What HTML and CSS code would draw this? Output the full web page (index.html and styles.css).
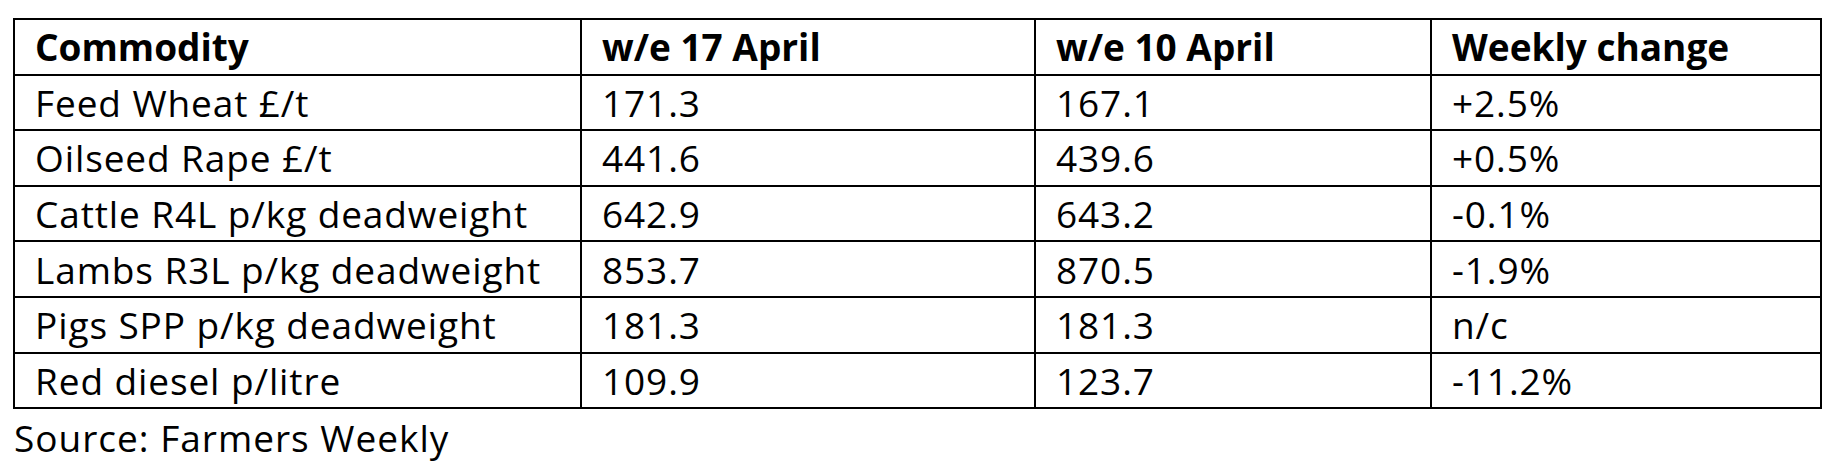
FILE: index.html
```html
<!DOCTYPE html>
<html lang="en">
<head>
<meta charset="utf-8">
<title>Commodity prices</title>
<link rel="stylesheet" href="styles.css">
</head>
<body>
<div class="page">
  <table class="prices">
    <colgroup>
      <col class="c1"><col class="c2"><col class="c3"><col class="c4">
    </colgroup>
    <thead>
      <tr><th>Commodity</th><th>w/e 17 April</th><th>w/e 10 April</th><th>Weekly change</th></tr>
    </thead>
    <tbody>
      <tr><td>Feed Wheat £/t</td><td>171.3</td><td>167.1</td><td>+2.5%</td></tr>
      <tr><td>Oilseed Rape £/t</td><td>441.6</td><td>439.6</td><td>+0.5%</td></tr>
      <tr><td>Cattle R4L p/kg deadweight</td><td>642.9</td><td>643.2</td><td>-0.1%</td></tr>
      <tr><td>Lambs R3L p/kg deadweight</td><td>853.7</td><td>870.5</td><td>-1.9%</td></tr>
      <tr><td>Pigs SPP p/kg deadweight</td><td>181.3</td><td>181.3</td><td>n/c</td></tr>
      <tr><td>Red diesel p/litre</td><td>109.9</td><td>123.7</td><td>-11.2%</td></tr>
    </tbody>
  </table>
  <p class="source">Source: Farmers Weekly</p>
</div>
</body>
</html>
```

FILE: styles.css
```css
html, body {
  margin: 0;
  padding: 0;
  background: #ffffff;
}
.page {
  padding: 18px 0 0 13px;
  font-family: "Open Sans", "Lato", sans-serif;
  color: #000000;
}
.prices {
  border-collapse: collapse;
  table-layout: fixed;
  width: 1807px;
  font-size: 37px;
}
.c1 { width: 567px; }
.c2 { width: 454px; }
.c3 { width: 396px; }
.c4 { width: 390px; }
.prices th,
.prices td {
  border: 2px solid #000000;
  height: 55.6px;
  padding: 0 0 0 20px;
  text-align: left;
  vertical-align: middle;
  box-sizing: border-box;
  line-height: 1;
  white-space: nowrap;
}
.prices th {
  font-weight: 700;
  letter-spacing: 0;
}
.prices td {
  font-weight: 400;
  letter-spacing: 0.9px;
}
.source {
  margin: 7px 0 0 1px;
  font-size: 37px;
  line-height: 1.2;
  letter-spacing: 1px;
}
```
